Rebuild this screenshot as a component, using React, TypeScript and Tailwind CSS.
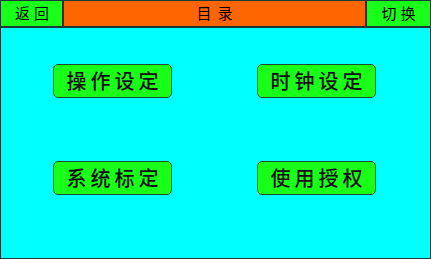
const cjk = { fontFamily: '"Noto Sans CJK SC", "Noto Sans", sans-serif' };

function MenuButton({ label }: { label: string }) {
  return (
    <button
      className="flex h-[34px] w-[119px] items-center justify-center rounded-[5px] border-[1.5px] border-[#1e4d2b] bg-[#1aff1a] text-[20px] font-medium leading-none tracking-[4px] text-[#111]"
      style={cjk}
    >
      <span className="pl-[4px]">{label}</span>
    </button>
  );
}

export default function App() {
  return (
    <div className="flex h-[259px] w-[431px] flex-col border border-[#1c3a3a] bg-[#00ffff]" style={cjk}>
      <div className="flex h-[27px] shrink-0 border-b-2 border-[#1c3a3a]">
        <div className="flex w-[63px] items-center justify-center border-r-2 border-[#1c3a3a] bg-[#1aff1a] text-[15px] tracking-[4px] text-black">
          <span className="pl-[5px]">返回</span>
        </div>
        <div className="flex flex-1 items-center justify-center bg-[#ff6600] text-[15px] tracking-[6px] text-black">
          <span className="pl-[6px]">目录</span>
        </div>
        <div className="flex w-[65px] items-center justify-center border-l-2 border-[#1c3a3a] bg-[#1aff1a] text-[15px] tracking-[4px] text-black">
          <span className="pl-[4px]">切换</span>
        </div>
      </div>
      <div className="grid grid-cols-[119px_119px] gap-x-[85px] gap-y-[63px] pl-[52px] pt-[36px]">
        <MenuButton label="操作设定" />
        <MenuButton label="时钟设定" />
        <MenuButton label="系统标定" />
        <MenuButton label="使用授权" />
      </div>
    </div>
  );
}
